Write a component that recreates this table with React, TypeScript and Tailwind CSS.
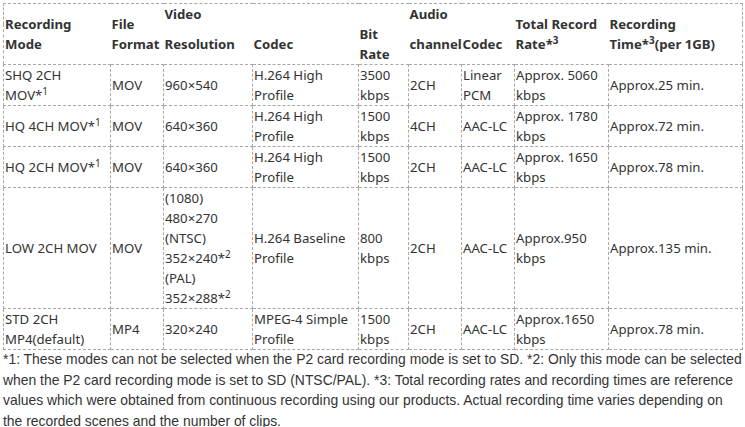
const COLS = [107, 53, 89, 106, 50, 53, 53, 94, 134]

type Row = {
  mode: React.ReactNode
  format: string
  res: React.ReactNode
  codec: string
  bitrate: string
  channel: string
  acodec: string
  total: string
  time: string
}

const Sup = ({ n }: { n: number }) => (
  <>
    *<sup className="text-[10px]">{n}</sup>
  </>
)

const ROWS: Row[] = [
  { mode: <>SHQ 2CH<br />MOV<Sup n={1} /></>, format: 'MOV', res: '960×540', codec: 'H.264 High Profile', bitrate: '3500 kbps', channel: '2CH', acodec: 'Linear PCM', total: 'Approx. 5060 kbps', time: 'Approx.25 min.' },
  { mode: <>HQ 4CH MOV<Sup n={1} /></>, format: 'MOV', res: '640×360', codec: 'H.264 High Profile', bitrate: '1500 kbps', channel: '4CH', acodec: 'AAC-LC', total: 'Approx. 1780 kbps', time: 'Approx.72 min.' },
  { mode: <>HQ 2CH MOV<Sup n={1} /></>, format: 'MOV', res: '640×360', codec: 'H.264 High Profile', bitrate: '1500 kbps', channel: '2CH', acodec: 'AAC-LC', total: 'Approx. 1650 kbps', time: 'Approx.78 min.' },
  {
    mode: 'LOW 2CH MOV',
    format: 'MOV',
    res: (
      <>
        (1080)<br />480×270<br />(NTSC)<br />352×240<Sup n={2} /><br />(PAL)<br />352×288<Sup n={2} />
      </>
    ),
    codec: 'H.264 Baseline Profile',
    bitrate: '800 kbps',
    channel: '2CH',
    acodec: 'AAC-LC',
    total: 'Approx.950 kbps',
    time: 'Approx.135 min.',
  },
  { mode: 'STD 2CH MP4(default)', format: 'MP4', res: '320×240', codec: 'MPEG-4 Simple Profile', bitrate: '1500 kbps', channel: '2CH', acodec: 'AAC-LC', total: 'Approx.1650 kbps', time: 'Approx.78 min.' },
]

const td = 'border border-dashed border-[#a8a8a8] px-px align-middle'
const th = 'px-px align-middle text-left font-bold'

export default function App() {
  return (
    <div className="h-[427px] overflow-hidden bg-white p-[3px] text-[#333] text-[13.2px] leading-5 font-[Noto_Sans,sans-serif]">
      <table className="table-fixed border-collapse w-[739px]">
        <colgroup>
          {COLS.map((w, i) => (
            <col key={i} style={{ width: w }} />
          ))}
        </colgroup>
        <thead className="border border-dashed border-[#a8a8a8]">
          <tr>
            <th rowSpan={2} className={th}>Recording Mode</th>
            <th rowSpan={2} className={th}>File Format</th>
            <th colSpan={3} className={th}>Video</th>
            <th colSpan={2} className={th}>Audio</th>
            <th rowSpan={2} className={th}>Total Record Rate<Sup n={3} /></th>
            <th rowSpan={2} className={th}>Recording Time<Sup n={3} />(per 1GB)</th>
          </tr>
          <tr className="h-10">
            <th className={th}>Resolution</th>
            <th className={th}>Codec</th>
            <th className={th}>Bit Rate</th>
            <th className={th}>channel</th>
            <th className={th}>Codec</th>
          </tr>
        </thead>
        <tbody>
          {ROWS.map((r, i) => (
            <tr key={i}>
              <td className={td}>{r.mode}</td>
              <td className={td}>{r.format}</td>
              <td className={td}>{r.res}</td>
              <td className={td}>{r.codec}</td>
              <td className={td}>{r.bitrate}</td>
              <td className={td}>{r.channel}</td>
              <td className={td}>{r.acodec}</td>
              <td className={td}>{r.total}</td>
              <td className={td}>{r.time}</td>
            </tr>
          ))}
        </tbody>
      </table>
      <p className="-mt-px whitespace-nowrap text-[13.9px] leading-[20.7px] font-[Liberation_Sans,sans-serif]">
        *1: These modes can not be selected when the P2 card recording mode is set to SD. *2: Only this mode can be selected
        <br />
        when the P2 card recording mode is set to SD (NTSC/PAL). *3: Total recording rates and recording times are reference
        <br />
        values which were obtained from continuous recording using our products. Actual recording time varies depending on
        <br />
        the recorded scenes and the number of clips.
      </p>
    </div>
  )
}
